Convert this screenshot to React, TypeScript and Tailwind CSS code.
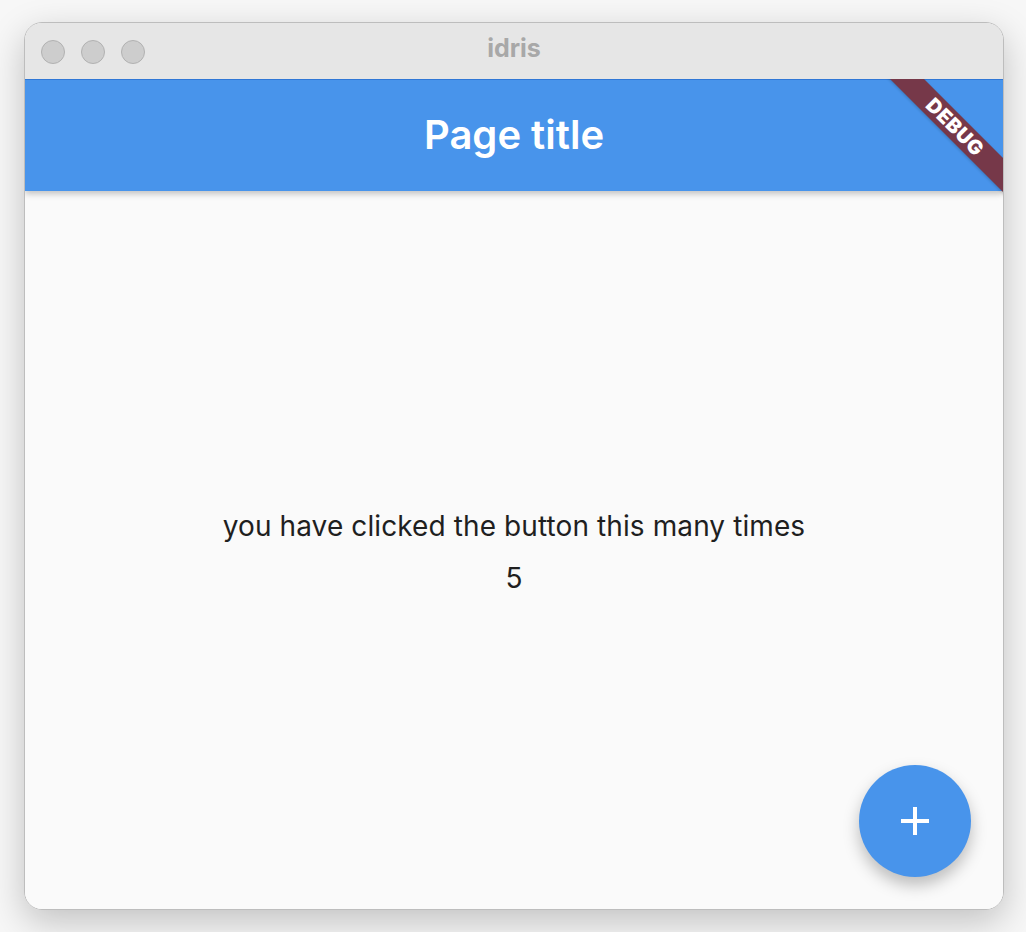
import React from "react";

export default function App() {
  return (
    <div className="w-[1026px] h-[932px] bg-[#f7f7f7] pl-[24px] pt-[22px]" style={{ fontFamily: "Inter, 'Noto Sans', sans-serif" }}>
      <div className="w-[980px] h-[888px] rounded-[18px] overflow-hidden border border-[#bdbdbd] shadow-[0_12px_36px_rgba(0,0,0,0.22)] flex flex-col">
        <div className="h-[56px] bg-[#e6e6e6] grid grid-cols-[1fr_auto_1fr] items-center shrink-0">
          <div className="flex items-center gap-[16px] pl-[16px] pt-[1px]">
            <span className="w-[24px] h-[24px] rounded-full bg-[#cdcdcd] border border-[#b1b1b1]" />
            <span className="w-[24px] h-[24px] rounded-full bg-[#cdcdcd] border border-[#b1b1b1]" />
            <span className="w-[24px] h-[24px] rounded-full bg-[#cdcdcd] border border-[#b1b1b1]" />
          </div>
          <div className="text-[25px] font-bold text-[#a8a8a8] leading-none pb-[5px]">idris</div>
          <div />
        </div>
        <div className="flex-1 flex flex-col relative overflow-hidden">
          <div className="h-[112px] shrink-0 bg-[#4894eb] border-t border-[#2f77d6] flex items-center justify-center relative z-10 shadow-[0_3px_6px_rgba(0,0,0,0.22)]">
            <span className="text-white text-[40px] font-semibold leading-none pb-[2px]">Page title</span>
          </div>
          <div className="flex-1 bg-[#fafafa] flex flex-col items-center justify-center gap-[18px] relative pt-[4px]">
            <div className="text-[#1f1f1f] text-[28px] leading-[34px] tracking-[0.1px]">you have clicked the button this many times</div>
            <div className="text-[#1f1f1f] text-[28px] leading-[34px]">5</div>
            <button className="absolute right-[32px] bottom-[32px] w-[112px] h-[112px] rounded-full bg-[#4894eb] flex items-center justify-center shadow-[0_8px_16px_rgba(0,0,0,0.25)]">
              <svg width="30" height="30" viewBox="0 0 30 30">
                <rect x="13" y="1" width="4" height="28" fill="white" />
                <rect x="1" y="13" width="28" height="4" fill="white" />
              </svg>
            </button>
          </div>
          <div className="absolute top-[36px] right-[-52px] w-[200px] h-[24px] rotate-45 bg-[#763849] z-20 flex items-center justify-center shadow-[0_1px_3px_rgba(0,0,0,0.2)]">
            <span className="text-white text-[20px] font-black tracking-[0.5px] leading-none">DEBUG</span>
          </div>
        </div>
      </div>
    </div>
  );
}
